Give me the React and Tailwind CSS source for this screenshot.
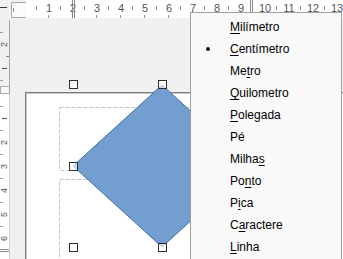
import React from 'react'

const units = [
  { pre: '', key: 'M', post: 'ilímetro' },
  { pre: '', key: 'C', post: 'entímetro', checked: true },
  { pre: 'Me', key: 't', post: 'ro' },
  { pre: '', key: 'Q', post: 'uilometro' },
  { pre: '', key: 'P', post: 'olegada' },
  { pre: 'Pé', key: '', post: '' },
  { pre: 'Milha', key: 's', post: '' },
  { pre: 'Po', key: 'n', post: 'to' },
  { pre: 'P', key: 'i', post: 'ca' },
  { pre: 'C', key: 'a', post: 'ractere' },
  { pre: '', key: 'L', post: 'inha' },
]

const topNums = [1, 2, 3, 4, 5, 6, 7, 8, 9, 10, 11, 12, 13]

function TopRuler() {
  return (
    <div className="flex h-[18px] shrink-0">
      <div className="w-[11px] shrink-0 pt-[7px]">
        <div className="h-px w-[7px] bg-[#3a3a3a]" />
      </div>
      <div className="w-[15px] shrink-0 mt-[2px] border border-r-0 border-[#a8a8a8] rounded-l-[2px] bg-[#fbfbfb] pl-[1px] pt-[5px]">
        <div className="w-px h-[4px] bg-[#8a8a8a]" />
      </div>
      <div className="flex-1 bg-white relative flex pl-[11px] pt-[2px]">
        {topNums.map(n => (
          <span key={n} className="w-[24px] shrink-0 text-center text-[11px] leading-[13px] text-[#555]">
            {n}
          </span>
        ))}
        <svg className="absolute left-0 top-0" width="317" height="18">
          {topNums.map(n => (
            <g key={n}>
              <line x1={24 * n - 1.5} y1="15" x2={24 * n - 1.5} y2="18" stroke="#9a9a9a" />
              <line x1={24 * n - 13.5} y1="6" x2={24 * n - 13.5} y2="10" stroke="#8a8a8a" />
            </g>
          ))}
          <line x1="46.5" y1="0" x2="46.5" y2="18" stroke="#8c8c8c" />
          <line x1="48.5" y1="0" x2="48.5" y2="18" stroke="#8c8c8c" />
          <line x1="224.5" y1="0" x2="224.5" y2="18" stroke="#8c8c8c" />
          <line x1="226.5" y1="0" x2="226.5" y2="18" stroke="#8c8c8c" />
        </svg>
      </div>
    </div>
  )
}

function RulerMark({ n }) {
  return (
    <div className="h-[24px] flex items-center justify-center">
      {Math.abs(n) === 1 ? (
        <div className="w-[5px] h-px bg-[#555]" />
      ) : (
        <span className="text-[9px] leading-[9px] text-[#555] -rotate-90">{Math.abs(n)}</span>
      )}
    </div>
  )
}

function LeftRuler() {
  return (
    <div className="w-[10px] shrink-0 flex flex-col">
      <div className="h-[66px] mt-[2px] border-r border-[#a8a8a8] relative flex flex-col pt-[12px]">
        <RulerMark n={-2} />
        <RulerMark n={-1} />
        <svg className="absolute left-0 top-0" width="9" height="66">
          <line x1="6" y1="36.5" x2="9" y2="36.5" stroke="#8a8a8a" />
          <line x1="0" y1="12.5" x2="3" y2="12.5" stroke="#9a9a9a" />
          <line x1="0" y1="60.5" x2="3" y2="60.5" stroke="#9a9a9a" />
        </svg>
      </div>
      <div className="h-[8px] border border-[#a8a8a8] bg-[#f8f8f8]" />
      <div className="flex-1 bg-white border-r border-[#d0d0d0] relative flex flex-col pt-[12px]">
        {[1, 2, 3, 4, 5, 6].map(n => <RulerMark key={n} n={n} />)}
        <svg className="absolute left-0 top-0" width="9" height="170">
          {[1, 2, 3, 4, 5, 6].map(n => (
            <line key={n} x1="0" y1={24 * n - 11.5} x2="3" y2={24 * n - 11.5} stroke="#9a9a9a" />
          ))}
          <line x1="0" y1="155.5" x2="9" y2="155.5" stroke="#8c8c8c" />
          <line x1="0" y1="157.5" x2="9" y2="157.5" stroke="#8c8c8c" />
        </svg>
      </div>
    </div>
  )
}

function Canvas() {
  const handles = [[63, 66], [152, 66], [63, 148], [152, 229], [63, 229]]
  return (
    <div className="flex-1 relative overflow-hidden">
      <div className="ml-[15px] mt-[74px] w-[400px] h-[300px] bg-white border-l border-t border-[#7c7c7c] shadow-[inset_1px_1px_0_#c8c8c8]" />
      <svg className="absolute left-0 top-0" width="333" height="241">
        <rect x="49.5" y="89.5" width="220" height="63" fill="none" stroke="#c4c4c4" strokeDasharray="4 2" />
        <rect x="49.5" y="161.5" width="220" height="200" fill="none" stroke="#c4c4c4" strokeDasharray="4 2" />
        <polygon points="152,67 63,148 152,229 241,148" fill="#729fcf" stroke="#3f6fa8" strokeWidth="1" />
        {handles.map(([x, y]) => (
          <rect key={x + '-' + y} x={x - 3.5} y={y - 3.5} width="8" height="8" fill="rgba(255,255,255,0.65)" stroke="#2e2e2e" strokeWidth="1" />
        ))}
      </svg>
    </div>
  )
}

function UnitMenu() {
  return (
    <div className="absolute left-[190px] top-[12px] w-[152px] h-[260px] bg-[#f9f9f9] border border-[#a0a0a0] pt-[3px] text-[12px] text-black">
      {units.map((u, i) => (
        <div key={i} className="h-[22px] flex items-center">
          <div className="w-[34px] flex justify-center">
            {u.checked && <div className="w-[4px] h-[4px] rounded-full bg-[#1a1a1a]" />}
          </div>
          <span className="pl-[5px]">
            {u.pre}
            {u.key && <span className="underline underline-offset-2">{u.key}</span>}
            {u.post}
          </span>
        </div>
      ))}
    </div>
  )
}

export default function App() {
  return (
    <div className="w-[343px] h-[259px] relative overflow-hidden bg-[#f0f0f0] font-['Liberation_Sans',Arial,sans-serif]">
      <TopRuler />
      <div className="flex h-[241px]">
        <LeftRuler />
        <Canvas />
      </div>
      <UnitMenu />
    </div>
  )
}
